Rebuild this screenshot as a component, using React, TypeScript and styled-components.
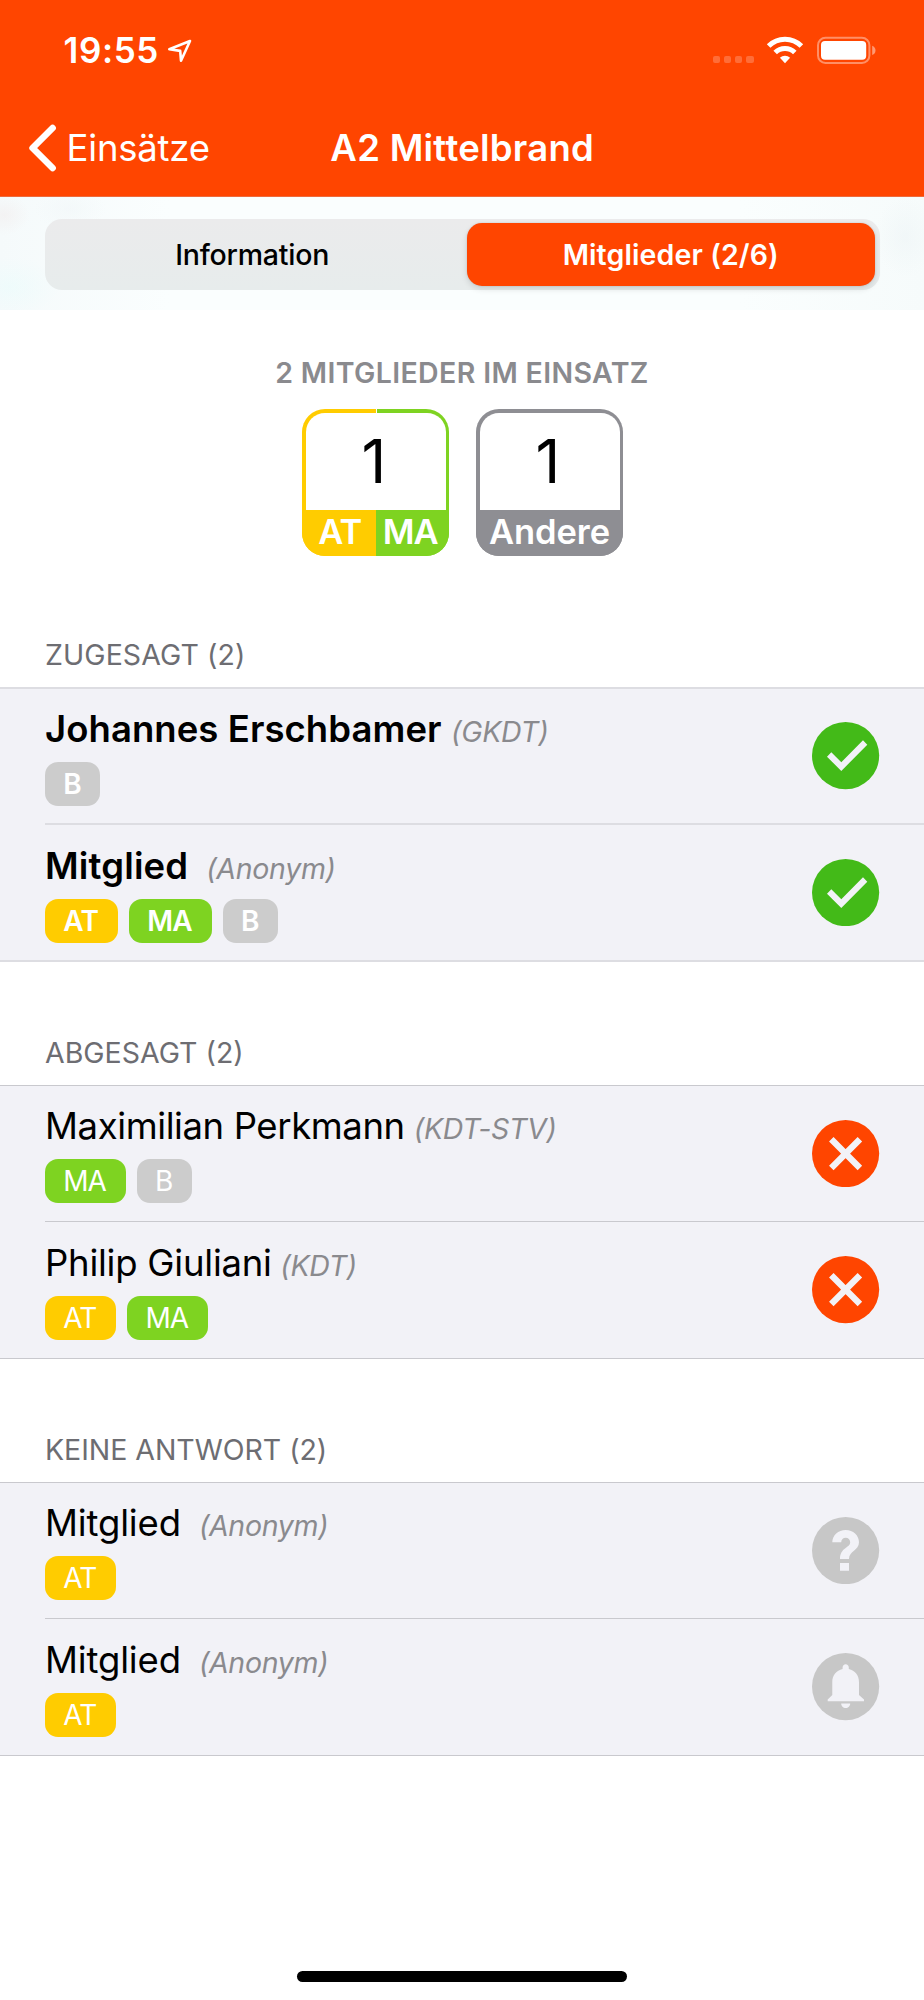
import React from 'react';
import styled, { createGlobalStyle } from 'styled-components';

const colors = {
  accent: '#ff4500',
  yellow: '#ffcc00',
  green: '#7ed321',
  grey: '#8e8e93',
  badgeGrey: '#cccccc',
  accepted: '#43ba18',
  pending: '#c7c7c7',
  rowBackground: '#f2f2f7',
};

const GlobalStyle = createGlobalStyle`
  *, *::before, *::after { box-sizing: border-box; }
  body {
    margin: 0;
    background: #fff;
    color: #000;
    font-family: Inter, "Liberation Sans", sans-serif;
  }
`;

const Screen = styled.div`
  display: flex;
  flex-direction: column;
  width: 924px;
  height: 2000px;
  background: #fff;
  white-space: nowrap;
`;

/* ---------- Header ---------- */

const Header = styled.header`
  height: 197px;
  background: ${colors.accent};
  border-bottom: 1px solid #ee6a3c;
  color: #fff;
`;

const StatusBar = styled.div`
  display: flex;
  align-items: flex-start;
  justify-content: space-between;
  height: 100px;
  padding: 29px 47px 0 63.5px;
`;

const StatusLeft = styled.div`
  display: flex;
  align-items: flex-start;
`;

const Time = styled.span`
  font-size: 35px;
  font-weight: 600;
  line-height: 42px;
  letter-spacing: 0.6px;
`;

const LocationIcon = styled.svg`
  width: 26px;
  height: 26px;
  margin: 9px 0 0 8px;
`;

const StatusRight = styled.div`
  display: flex;
  align-items: flex-start;
  padding-top: 7px;
`;

const SignalDots = styled.div`
  display: flex;
  gap: 4px;
  padding-top: 20px;
  margin-right: 12px;
`;

const SignalDot = styled.i`
  width: 7.2px;
  height: 7.2px;
  border-radius: 2px;
  background: rgba(255, 255, 255, 0.22);
`;

const WifiIcon = styled.svg`
  width: 38px;
  height: 28px;
  margin-right: 13.5px;
`;

const BatteryIcon = styled.svg`
  width: 60px;
  height: 28px;
`;

const NavBar = styled.nav`
  display: grid;
  grid-template-columns: 1fr auto 1fr;
  align-items: center;
  height: 95px;
  padding-left: 28px;
`;

const BackButton = styled.div`
  display: flex;
  align-items: center;
  font-size: 36.5px;
  line-height: 44px;
  letter-spacing: -0.2px;
`;

const ChevronIcon = styled.svg`
  width: 30px;
  height: 50px;
  margin-right: 8.5px;
`;

const NavTitle = styled.h1`
  margin: 0 27.5px 0 0;
  font-size: 36.5px;
  font-weight: 600;
  line-height: 44px;
  letter-spacing: 0.26px;
`;

/* ---------- Segmented control ---------- */

const SegmentArea = styled.div`
  height: 113px;
  padding: 22px 44.5px 20px 45px;
  background:
    radial-gradient(ellipse 26px 20px at 4px 18px, rgba(240, 228, 228, 0.35), transparent),
    radial-gradient(ellipse 50px 30px at 10px 90px, rgba(232, 252, 252, 0.5), transparent),
    radial-gradient(ellipse 36px 22px at 70px 12px, rgba(238, 244, 246, 0.4), transparent),
    radial-gradient(ellipse 30px 40px at 905px 40px, rgba(236, 243, 245, 0.5), transparent),
    linear-gradient(90deg, #f5fafb 0, #fafefe 170px, #fafefe 740px, #f6fbfb 100%);
`;

const SegmentTrack = styled.div`
  display: grid;
  grid-template-columns: 421.5px 408.5px;
  height: 71px;
  padding: 4px 0;
  border-radius: 17px;
  background: linear-gradient(180deg, #ebebec, #e7ecec);
`;

const Segment = styled.div<{ $active?: boolean }>`
  display: flex;
  align-items: center;
  justify-content: center;
  border-radius: 15px;
  font-size: 28.5px;
  font-weight: ${p => (p.$active ? 600 : 500)};
  letter-spacing: ${p => (p.$active ? '0.12px' : '-0.2px')};
  line-height: 34px;
  color: ${p => (p.$active ? '#fff' : '#000')};
  background: ${p => (p.$active ? colors.accent : 'transparent')};
  box-shadow: ${p => (p.$active ? '0 3px 6px rgba(0, 0, 0, 0.12), 0 0 2px rgba(0, 0, 0, 0.14)' : 'none')};
  padding-right: ${p => (p.$active ? '0' : '7px')};
`;

/* ---------- Summary ---------- */

const Summary = styled.section`
  display: flex;
  flex-direction: column;
  align-items: center;
  padding: 46px 0 8px;
`;

const SummaryTitle = styled.h2`
  margin: 0 0 19px;
  font-size: 28.5px;
  font-weight: 600;
  line-height: 34px;
  letter-spacing: 0.36px;
  color: #8a8a8e;
`;

const Counters = styled.div`
  display: flex;
  gap: 27px;
  padding-left: 1px;
`;

const CounterBox = styled.div<{ $frame: string }>`
  display: flex;
  flex-direction: column;
  width: 147px;
  height: 147px;
  padding-top: 3.5px;
  border-radius: 23px;
  overflow: hidden;
  background: ${p => p.$frame};
`;

const CounterValue = styled.div`
  height: 97.5px;
  margin: 0 3.5px;
  padding-right: 3px;
  border-radius: 19px 19px 0 0;
  background: #fff;
  font-size: 61px;
  line-height: 97.5px;
  text-align: center;
`;

const CounterLabels = styled.div`
  display: flex;
  flex: 1;
  font-size: 34.5px;
  font-weight: 600;
  line-height: 44px;
  color: #fff;
`;

const CounterLabel = styled.span<{ $color: string; $shift?: number; $spacing: number }>`
  flex: 1;
  background: ${p => p.$color};
  letter-spacing: ${p => p.$spacing}px;
  text-align: center;
  text-indent: ${p => p.$shift ?? 0}px;
`;

/* ---------- Member lists ---------- */

const SectionTitle = styled.h3<{ $spacing: number }>`
  margin: 0;
  padding: 74px 0 15px 45px;
  font-size: 28.5px;
  font-weight: 400;
  line-height: 34px;
  letter-spacing: ${p => p.$spacing}px;
  color: #6d6d72;
`;

const List = styled.div<{ $line: number; $lineColor: string }>`
  border: 0 solid ${p => p.$lineColor};
  border-width: ${p => p.$line}px 0;
  background: ${colors.rowBackground};
`;

const Divider = styled.div<{ $line: number; $lineColor: string }>`
  height: ${p => p.$line}px;
  margin-left: 45px;
  background: ${p => p.$lineColor};
`;

const Row = styled.div<{ $height: number; $top: number }>`
  display: flex;
  justify-content: space-between;
  height: ${p => p.$height}px;
  padding: 0 44.5px 0 45px;

  > div {
    padding-top: ${p => p.$top}px;
  }
  > svg {
    align-self: center;
  }
`;

const NameLine = styled.div`
  display: flex;
  align-items: baseline;
  height: 44px;
`;

const Name = styled.span<{ $bold: boolean; $spacing: number }>`
  font-size: 36.5px;
  line-height: 44px;
  font-weight: ${p => (p.$bold ? 600 : 400)};
  letter-spacing: ${p => p.$spacing}px;
`;

const Rank = styled.span<{ $gap: number }>`
  margin-left: ${p => p.$gap}px;
  font-size: 28.5px;
  font-style: italic;
  line-height: 34px;
  letter-spacing: -0.3px;
  color: #8a8a8e;
`;

const Badges = styled.div`
  display: flex;
  gap: 11.3px;
  margin-top: 11.5px;
`;

const Badge = styled.span<{ $color: string; $bold: boolean }>`
  height: 44px;
  padding: 0 19.5px 0 18.2px;
  border-radius: 13px;
  background: ${p => p.$color};
  color: #fff;
  font-size: 28px;
  font-weight: ${p => (p.$bold ? 600 : 400)};
  letter-spacing: ${p => (p.$bold ? -0.7 : -0.9)}px;
  line-height: 44px;
`;

const StatusSvg = styled.svg`
  width: 67.2px;
  height: 67.2px;
  flex: none;
`;

const HomeIndicator = styled.div`
  width: 330px;
  height: 11px;
  margin: auto auto 18px;
  border-radius: 6px;
  background: #000;
`;

type Status = 'yes' | 'no' | 'unknown' | 'alert';

const statusColor: Record<Status, string> = {
  yes: colors.accepted,
  no: colors.accent,
  unknown: colors.pending,
  alert: colors.pending,
};

function StatusIcon({ status }: { status: Status }) {
  const ink = colors.rowBackground;
  return (
    <StatusSvg viewBox="0 0 67.2 67.2">
      <circle cx="33.6" cy="33.6" r="33.6" fill={statusColor[status]} />
      {status === 'yes' && (
        <path d="M15 34.7 19.3 30.3 29.3 40.2 51 18.3 55.3 22.7 29.3 49Z" fill={ink} />
      )}
      {status === 'no' && (
        <path d="M19.3 19.3 47.9 47.9M47.9 19.3 19.3 47.9" stroke={ink} strokeWidth="6.4" />
      )}
      {status === 'unknown' && (
        <path
          d="M20.3 25.3C20.3 18.4 26.3 13 33.7 13S47 18.4 47 25.3C47 33.6 37 34 37 42H28C28 30.5 38.2 31 38.2 25.3C38.2 22.8 36.2 20.8 33.7 20.8S29.2 22.8 29.2 25.3ZM28 46H37V53.8H28Z"
          fill={ink}
        />
      )}
      {status === 'alert' && (
        <path
          d="M33.7 11.3C35.5 11.3 36.8 12.7 36.8 14.4V16C43 17.5 47 22.3 47 29V42L52 46.6V48.3H15.7V46.6L20.3 42V29C20.3 22.3 24.4 17.5 30.6 16V14.4C30.6 12.7 31.9 11.3 33.7 11.3ZM29.2 50.5H38.2C38.2 53 36.2 55.1 33.7 55.1S29.2 53 29.2 50.5Z"
          fill={ink}
        />
      )}
    </StatusSvg>
  );
}

interface Member {
  name: string;
  rank: string;
  spacing: number;
  gap: number;
  badges: string[];
  status: Status;
}

interface MemberSection {
  title: string;
  spacing: number;
  bold: boolean;
  line: number;
  lineColor: string;
  heights: [number, number];
  members: Member[];
}

const badgeColor: Record<string, string> = {
  AT: colors.yellow,
  MA: colors.green,
  B: colors.badgeGrey,
};

const sections: MemberSection[] = [
  {
    title: 'ZUGESAGT (2)', spacing: 0.08, bold: true, line: 2, lineColor: '#dddde2', heights: [134, 135],
    members: [
      { name: 'Johannes Erschbamer', rank: '(GKDT)', spacing: 0.06, gap: 9.5, badges: ['B'], status: 'yes' },
      { name: 'Mitglied', rank: '(Anonym)', spacing: 0.15, gap: 18, badges: ['AT', 'MA', 'B'], status: 'yes' },
    ],
  },
  {
    title: 'ABGESAGT (2)', spacing: 0, bold: false, line: 1, lineColor: '#c9c9ce', heights: [135, 136],
    members: [
      { name: 'Maximilian Perkmann', rank: '(KDT-STV)', spacing: -0.4, gap: 9, badges: ['MA', 'B'], status: 'no' },
      { name: 'Philip Giuliani', rank: '(KDT)', spacing: -0.24, gap: 8.7, badges: ['AT', 'MA'], status: 'no' },
    ],
  },
  {
    title: 'KEINE ANTWORT (2)', spacing: -0.04, bold: false, line: 1, lineColor: '#c9c9ce', heights: [135, 136],
    members: [
      { name: 'Mitglied', rank: '(Anonym)', spacing: -0.15, gap: 18, badges: ['AT'], status: 'unknown' },
      { name: 'Mitglied', rank: '(Anonym)', spacing: -0.15, gap: 18, badges: ['AT'], status: 'alert' },
    ],
  },
];

export default function App() {
  return (
    <Screen>
      <GlobalStyle />
      <Header>
        <StatusBar>
          <StatusLeft>
            <Time>19:55</Time>
            <LocationIcon viewBox="0 0 26 26">
              <path d="M23 3 2.3 11.2 13.2 12.9 14 22.7Z" fill="none" stroke="#fff" strokeWidth="2.6" strokeLinejoin="round" />
            </LocationIcon>
          </StatusLeft>
          <StatusRight>
            <SignalDots>
              <SignalDot /><SignalDot /><SignalDot /><SignalDot />
            </SignalDots>
            <WifiIcon viewBox="0 0 38 28" fill="none" stroke="#fff" strokeWidth="5">
              <path d="M2.6 10.1A23.2 23.2 0 0 1 35.4 10.1" />
              <path d="M9.2 16.6A13.9 13.9 0 0 1 28.8 16.6" />
              <path d="M19 27.2 13.9 21.8A7.4 7.4 0 0 1 24.1 21.8Z" fill="#fff" stroke="none" />
            </WifiIcon>
            <BatteryIcon viewBox="0 0 60 28">
              <rect x="1" y="1.8" width="51.4" height="25.2" rx="7.5" fill="none" stroke="#fff" strokeOpacity="0.4" strokeWidth="2" />
              <rect x="4" y="5" width="45.2" height="18.8" rx="4" fill="#fff" />
              <path d="M55.2 9.7C59.6 11.4 59.6 17.4 55.2 19.1Z" fill="#fff" fillOpacity="0.45" />
            </BatteryIcon>
          </StatusRight>
        </StatusBar>
        <NavBar>
          <BackButton>
            <ChevronIcon viewBox="0 0 30 50">
              <path d="M24.6 5 4.6 25 24.6 45" fill="none" stroke="#fff" strokeWidth="6.6" strokeLinecap="round" strokeLinejoin="round" />
            </ChevronIcon>
            Einsätze
          </BackButton>
          <NavTitle>A2 Mittelbrand</NavTitle>
        </NavBar>
      </Header>

      <SegmentArea>
        <SegmentTrack>
          <Segment>Information</Segment>
          <Segment $active>Mitglieder (2/6)</Segment>
        </SegmentTrack>
      </SegmentArea>

      <Summary>
        <SummaryTitle>2 MITGLIEDER IM EINSATZ</SummaryTitle>
        <Counters>
          <CounterBox $frame={`linear-gradient(90deg, ${colors.yellow} 74px, #fff 74px, #fff 75px, ${colors.green} 75px)`}>
            <CounterValue>1</CounterValue>
            <CounterLabels>
              <CounterLabel $color={colors.yellow} $shift={2} $spacing={-1}>AT</CounterLabel>
              <CounterLabel $color={colors.green} $shift={-4} $spacing={-1}>MA</CounterLabel>
            </CounterLabels>
          </CounterBox>
          <CounterBox $frame={colors.grey}>
            <CounterValue>1</CounterValue>
            <CounterLabels>
              <CounterLabel $color={colors.grey} $spacing={-0.1}>Andere</CounterLabel>
            </CounterLabels>
          </CounterBox>
        </Counters>
      </Summary>

      {sections.map(section => (
        <section key={section.title}>
          <SectionTitle $spacing={section.spacing}>{section.title}</SectionTitle>
          <List $line={section.line} $lineColor={section.lineColor}>
            {section.members.map((member, i) => (
              <React.Fragment key={i}>
                {i > 0 && <Divider $line={section.line} $lineColor={section.lineColor} />}
                <Row $height={section.heights[i]} $top={17.5 + i}>
                  <div>
                    <NameLine>
                      <Name $bold={section.bold} $spacing={member.spacing}>{member.name}</Name>
                      <Rank $gap={member.gap}>{member.rank}</Rank>
                    </NameLine>
                    <Badges>
                      {member.badges.map(badge => (
                        <Badge key={badge} $color={badgeColor[badge]} $bold={section.bold}>{badge}</Badge>
                      ))}
                    </Badges>
                  </div>
                  <StatusIcon status={member.status} />
                </Row>
              </React.Fragment>
            ))}
          </List>
        </section>
      ))}

      <HomeIndicator />
    </Screen>
  );
}
